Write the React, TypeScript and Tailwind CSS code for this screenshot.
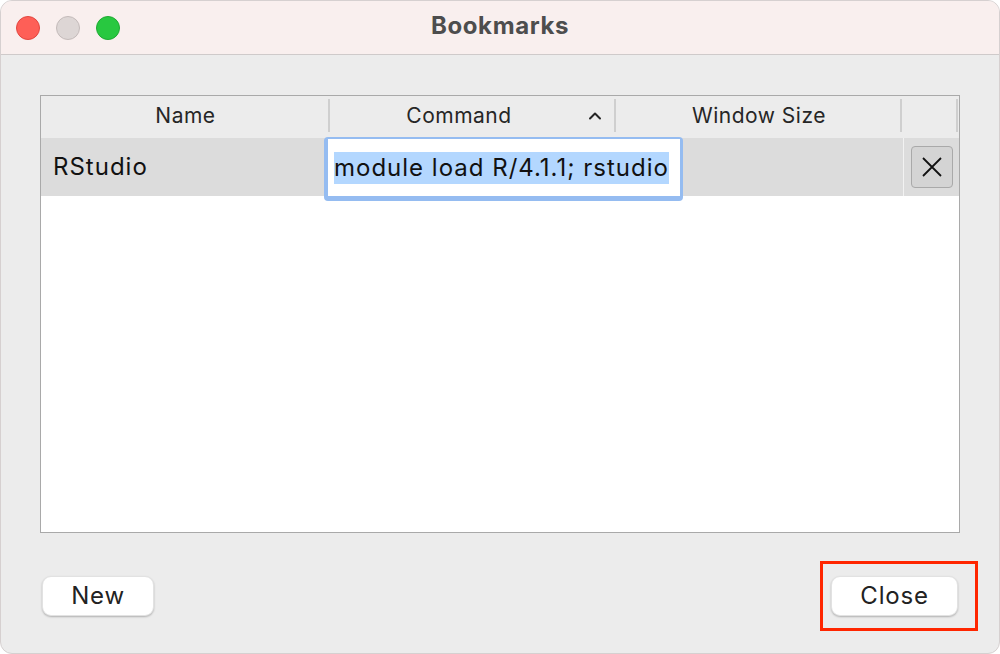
import React from 'react';

const font = { fontFamily: 'Inter, "Noto Sans", "Liberation Sans", sans-serif' };

const HeaderCell: React.FC<{ label?: string; width: string; sort?: boolean; last?: boolean }> = ({ label, width, sort, last }) => (
  <div className={`${width} relative flex items-center justify-center h-full pb-[3px] ${sort ? 'pr-[28px]' : ''}`}>
    {label && <span className="text-[21px] tracking-[0.5px] text-[#262626]">{label}</span>}
    {sort && (
      <svg className="absolute right-[14px] top-[15px]" width="14" height="9" viewBox="0 0 14 9" fill="none">
        <path d="M2 7.5L7 2.5L12 7.5" stroke="#262626" strokeWidth="2" strokeLinecap="round" strokeLinejoin="round" />
      </svg>
    )}
    {!last && <div className="absolute right-0 top-[3px] bottom-[6px] w-[2px] bg-[#cfcfcf]" />}
  </div>
);

export default function App() {
  return (
    <div className="w-[1000px] h-[654px] bg-white" style={font}>
      <div className="w-full h-full rounded-[12px] overflow-hidden border border-[#d6d0d0] bg-[#ececec] flex flex-col">
        {/* title bar */}
        <div className="h-[54px] shrink-0 bg-[#f9efee] border-b border-[#cfcaca] flex items-center relative">
          <div className="flex gap-[16px] pl-[15px]">
            <div className="w-[24px] h-[24px] rounded-full bg-[#fe5f57] border border-[#e2463f]" />
            <div className="w-[24px] h-[24px] rounded-full bg-[#ddd6d5] border border-[#c4bbba]" />
            <div className="w-[24px] h-[24px] rounded-full bg-[#28c840] border border-[#1eaa32]" />
          </div>
          <div className="absolute inset-0 flex items-center justify-center pointer-events-none">
            <span className="text-[24px] tracking-[0.6px] font-bold text-[#4d4d4d] -mt-[4px]">Bookmarks</span>
          </div>
        </div>

        {/* body */}
        <div className="flex-1 flex flex-col px-[39px] pt-[40px]">
          <div className="h-[438px] border border-[#a9a9a9] bg-white flex flex-col">
            {/* header */}
            <div className="h-[42px] bg-[#ececec] flex shrink-0">
              <HeaderCell label="Name" width="w-[289px]" />
              <HeaderCell label="Command" width="w-[286px]" sort />
              <HeaderCell label="Window Size" width="w-[286px]" />
              <HeaderCell width="w-[56px]" />
            </div>
            {/* row */}
            <div className="h-[58px] bg-[#dcdcdc] flex shrink-0">
              <div className="w-[283px] flex items-center pl-[12px]">
                <span className="text-[24px] tracking-[1px] text-[#111]">RStudio</span>
              </div>
              <div className="w-[359px] h-[64px] -mt-[1px] z-10 rounded-[4px] bg-[#95bcf1] pl-[4px] pr-[3px] pt-[2px] pb-[5px]">
                <div className="w-full h-full bg-white flex items-center pl-[6px]">
                  <span className="text-[24px] tracking-[1px] text-[#111] bg-[#b3d7ff] leading-[32px]">module load R/4.1.1; rstudio</span>
                </div>
              </div>
              <div className="flex-1" />
              <div className="w-[56px] border-l border-[#f2f2f2] flex items-center pl-[7px]">
                <div className="w-[42px] h-[42px] rounded-[4px] bg-[#d4d4d4] border border-[#a9a9a9] flex items-center justify-center">
                  <svg width="22" height="22" viewBox="0 0 22 22">
                    <path d="M2 2L20 20M20 2L2 20" stroke="#111" strokeWidth="1.8" />
                  </svg>
                </div>
              </div>
            </div>
            <div className="flex-1 bg-white" />
          </div>

          {/* buttons */}
          <div className="flex justify-between items-start mt-[28px]">
            <button className="ml-[2px] mt-[15px] w-[112px] h-[40px] rounded-[9px] bg-white shadow-[0_1px_2px_rgba(0,0,0,0.25)] border border-[#e2e2e2] text-[24px] tracking-[0.8px] text-[#222]">
              New
            </button>
            <div className="-mr-[18px] border-[3px] border-[#ff2600] pl-[8px] pr-[17px] py-[12px]">
              <button className="w-[127px] h-[40px] rounded-[9px] bg-white shadow-[0_1px_2px_rgba(0,0,0,0.25)] border border-[#e2e2e2] text-[24px] tracking-[0.8px] text-[#222]">
                Close
              </button>
            </div>
          </div>
        </div>
      </div>
    </div>
  );
}
